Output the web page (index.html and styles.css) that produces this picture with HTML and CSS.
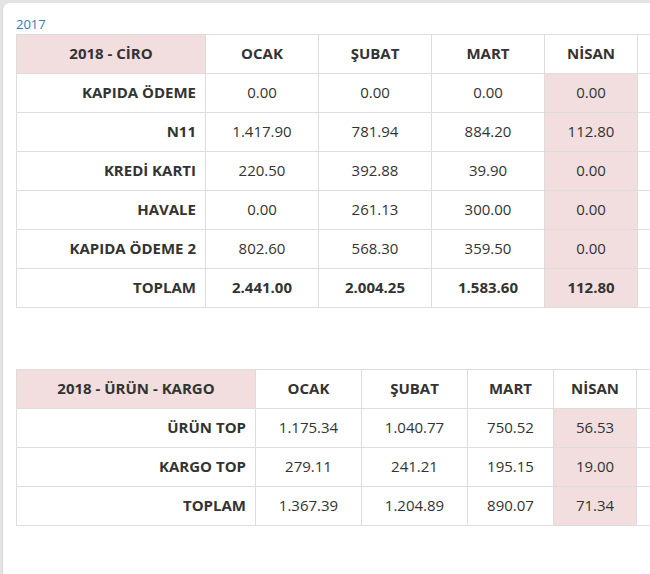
FILE: index.html
```html
<!DOCTYPE html>
<html lang="tr">
<head>
<meta charset="utf-8">
<title>Ciro</title>
<link rel="stylesheet" href="styles.css">
</head>
<body>
<div class="card">
  <a class="year-link" href="#">2017</a>
  <table class="report report-ciro">
    <colgroup>
      <col class="c-label"><col class="c-m"><col class="c-m"><col class="c-m"><col class="c-cur"><col class="c-next">
    </colgroup>
    <thead>
      <tr><th class="title">2018 - CİRO</th><th>OCAK</th><th>ŞUBAT</th><th>MART</th><th>NİSAN</th><th></th></tr>
    </thead>
    <tbody>
      <tr><th class="label">KAPIDA ÖDEME</th><td>0.00</td><td>0.00</td><td>0.00</td><td class="cur">0.00</td><td></td></tr>
      <tr><th class="label">N11</th><td>1.417.90</td><td>781.94</td><td>884.20</td><td class="cur">112.80</td><td></td></tr>
      <tr><th class="label">KREDİ KARTI</th><td>220.50</td><td>392.88</td><td>39.90</td><td class="cur">0.00</td><td></td></tr>
      <tr><th class="label">HAVALE</th><td>0.00</td><td>261.13</td><td>300.00</td><td class="cur">0.00</td><td></td></tr>
      <tr><th class="label">KAPIDA ÖDEME 2</th><td>802.60</td><td>568.30</td><td>359.50</td><td class="cur">0.00</td><td></td></tr>
      <tr class="total"><th class="label">TOPLAM</th><td>2.441.00</td><td>2.004.25</td><td>1.583.60</td><td class="cur">112.80</td><td></td></tr>
    </tbody>
  </table>

  <table class="report report-kargo">
    <colgroup>
      <col class="c-label"><col class="c-m"><col class="c-m"><col class="c-m3"><col class="c-cur"><col class="c-next">
    </colgroup>
    <thead>
      <tr><th class="title">2018 - ÜRÜN - KARGO</th><th>OCAK</th><th>ŞUBAT</th><th>MART</th><th>NİSAN</th><th></th></tr>
    </thead>
    <tbody>
      <tr><th class="label">ÜRÜN TOP</th><td>1.175.34</td><td>1.040.77</td><td>750.52</td><td class="cur">56.53</td><td></td></tr>
      <tr><th class="label">KARGO TOP</th><td>279.11</td><td>241.21</td><td>195.15</td><td class="cur">19.00</td><td></td></tr>
      <tr><th class="label">TOPLAM</th><td>1.367.39</td><td>1.204.89</td><td>890.07</td><td class="cur">71.34</td><td></td></tr>
    </tbody>
  </table>
</div>
</body>
</html>
```

FILE: styles.css
```css
html {
  overflow: hidden;
}
body {
  margin: 0;
  background: #e4e4e4;
  font-family: "Open Sans", "DejaVu Sans", sans-serif;
  color: #333;
}
.card {
  margin: 3px 0 0 2px;
  width: 780px;
  min-height: 600px;
  background: #fff;
  border-left: 1px solid #d8d8d8;
  border-top-left-radius: 7px;
  padding: 12px 0 0 13px;
  box-sizing: border-box;
  overflow: hidden;
}
.year-link {
  display: block;
  font-size: 13px;
  line-height: 19px;
  color: #337ab7;
  text-decoration: none;
}
.report {
  border-collapse: collapse;
  table-layout: fixed;
  font-size: 15px;
}
.report th,
.report td {
  border: 1px solid #ddd;
  height: 39px;
  padding: 0 8px 2px;
  text-align: center;
  vertical-align: middle;
  white-space: nowrap;
  overflow: hidden;
  box-sizing: border-box;
}
.report th {
  font-weight: 700;
}
.report th.title {
  background: #f2dede;
}
.report th.label {
  text-align: right;
  padding-right: 9px;
}
.report td.cur {
  background: #f2dede;
}
.report .total td {
  font-weight: 700;
}
.report-ciro {
  width: 721px;
}
.report-ciro .c-label { width: 189px; }
.report-ciro .c-m { width: 113px; }
.report-ciro .c-cur { width: 93px; }
.report-ciro .c-next { width: 100px; }

.report-kargo {
  width: 720px;
  margin-top: 61px;
}
.report-kargo .c-label { width: 239px; }
.report-kargo .c-m { width: 106px; }
.report-kargo .c-m3 { width: 86px; }
.report-kargo .c-cur { width: 83px; }
.report-kargo .c-next { width: 100px; }
```
